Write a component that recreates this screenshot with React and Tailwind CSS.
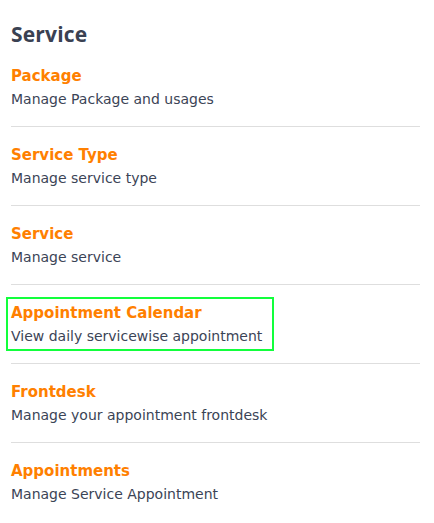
import React from "react";

const items = [
  { title: "Package", desc: "Manage Package and usages" },
  { title: "Service Type", desc: "Manage service type" },
  { title: "Service", desc: "Manage service" },
  { title: "Appointment Calendar", desc: "View daily servicewise appointment", highlight: true },
  { title: "Frontdesk", desc: "Manage your appointment frontdesk" },
  { title: "Appointments", desc: "Manage Service Appointment", last: true },
];

const dv = { fontFamily: '"DejaVu Sans", "Open Sans", sans-serif' };

export default function App() {
  return (
    <div
      className="w-[434px] h-[523px] bg-white overflow-hidden pl-[11px] pr-[14px] pt-[20px]"
      style={{ fontFamily: '"Open Sans", "Liberation Sans", sans-serif' }}
    >
      <h2 className="text-[21px] leading-[28px] font-bold text-[#3a4152] tracking-[0.2px]">Service</h2>
      <div className="mt-[16px] flex flex-col">
        {items.map((it, i) => (
          <div
            key={it.title}
            className={
              (i > 0 ? "pt-[16px] " : "") +
              (it.last ? "" : "pb-[14px] border-b border-[#dedede]")
            }
          >
            <div className="relative">
              {it.highlight && (
                <div className="absolute -left-[5px] -top-[4px] w-[268px] h-[54px] border-2 border-[#12ff3c]" />
              )}
              <div className="text-[15px] leading-[22px] pt-[1px] font-bold text-[#ff8000]" style={dv}>{it.title}</div>
              <div className="text-[14px] leading-[26px] -mt-[1px] text-[#3b4456]" style={dv}>{it.desc}</div>
            </div>
          </div>
        ))}
      </div>
    </div>
  );
}
